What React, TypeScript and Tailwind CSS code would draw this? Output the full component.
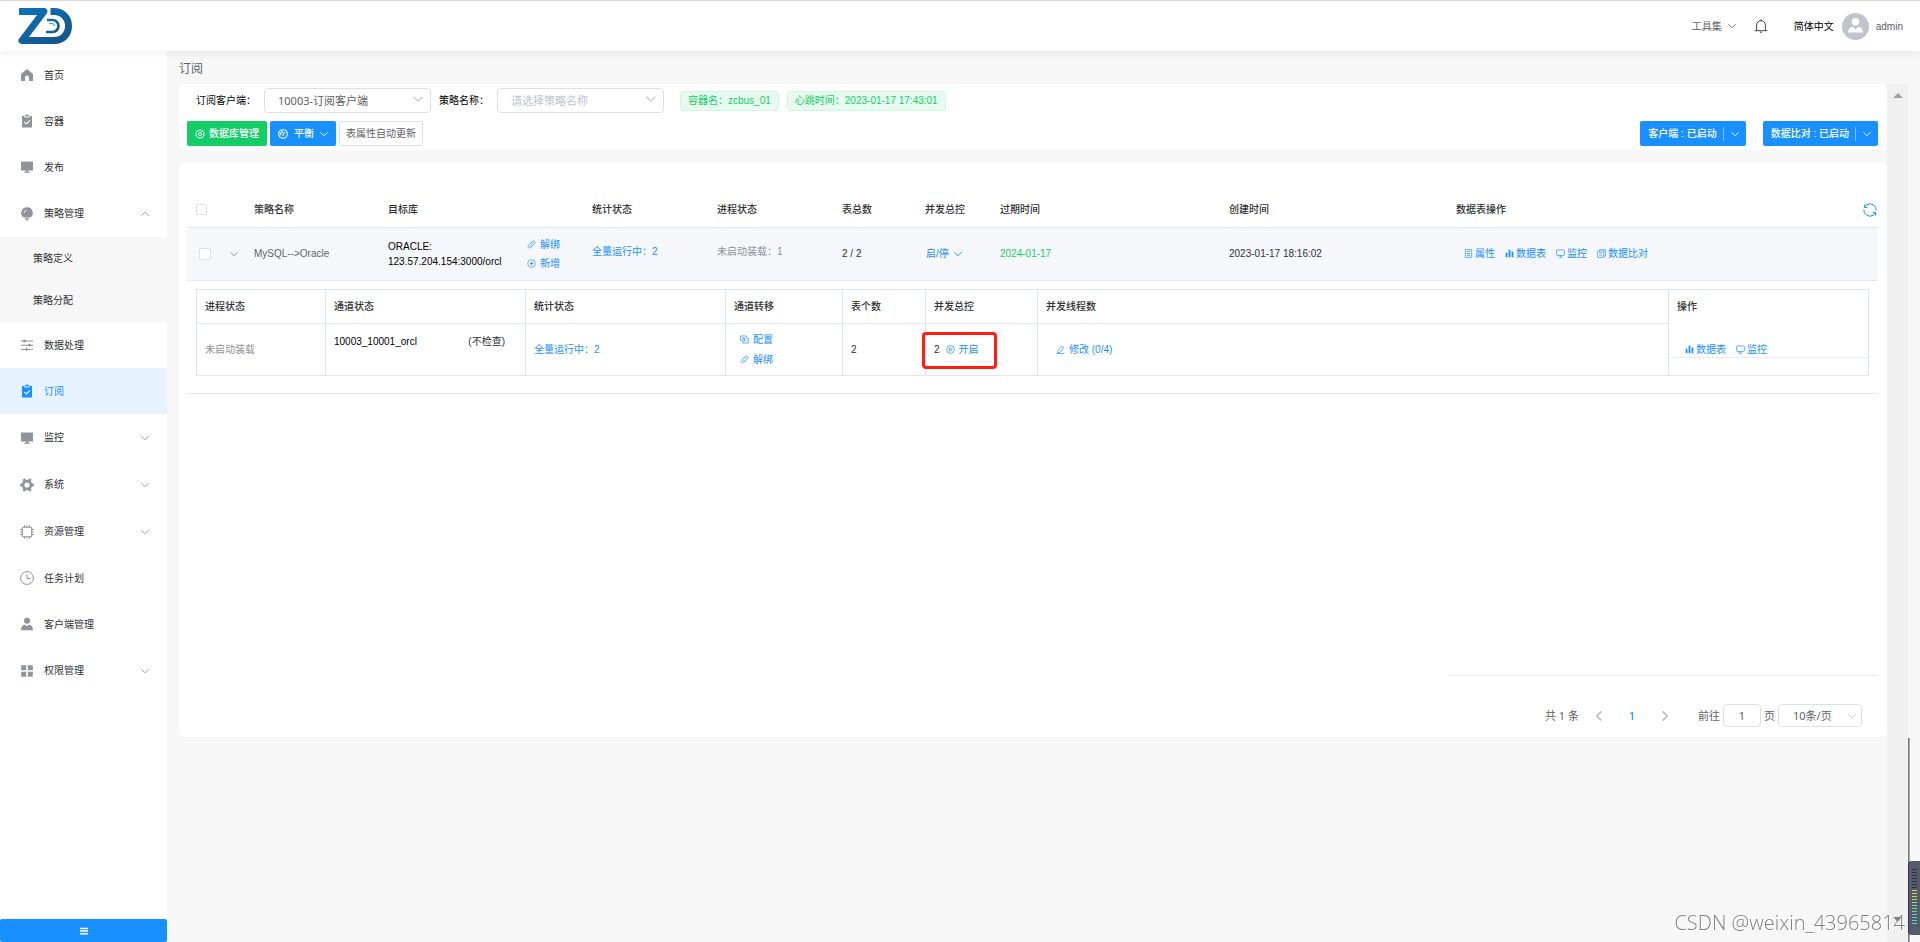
import type { ReactNode } from "react";

const icons = {
  home: <path fill="currentColor" d="M7 1 13 6v7H9V9.5a2 2 0 0 0-4 0V13H1V6z" />,
  clipboard: (
    <>
      <path fill="currentColor" d="M2 2h2.5v1.5h5V2H12v11.5H2zM5.2.8h3.6v1.8H5.2z" />
      <path fill="none" stroke="#fff" strokeWidth="1.1" d="m4.4 8 2 2 3.6-3.6" />
    </>
  ),
  screen: <path fill="currentColor" d="M1.5 1.5h11a.5.5 0 0 1 .5.5v8.5H1V2a.5.5 0 0 1 .5-.5zM5.8 10.5h2.4v1.2h1.6v1H4.2v-1h1.6z" />,
  bulb: (
    <>
      <path fill="currentColor" d="M7 .3a5.600 5.600 0 0 1 3.400 10.200H3.600A5.600 5.600 0 0 1 7 .3zM4.800 11.200h4.400v1H4.800zM5.800 12.600h2.400v.9H5.800z" />
      <path fill="none" stroke="#fff" strokeWidth=".8" d="M4 6a3 3 0 0 1 2.6-2.7" />
    </>
  ),
  sliders: (
    <g stroke="currentColor" fill="currentColor" strokeWidth="1">
      <path d="M1 3h12M1 7.2h12M1 11.4h12" />
      <circle cx="4.5" cy="3" r="1" />
      <circle cx="9.5" cy="7.2" r="1" />
      <circle cx="6.5" cy="11.4" r="1" />
    </g>
  ),
  gear: (
    <g fill="none" stroke="currentColor">
      <circle cx="7" cy="7" r="3.9" strokeWidth="2.6" />
      <path
        strokeWidth="3"
        d="M.2 7h2M11.800 7h2M3.600 1.100l1 1.700M9.400 11.200l1 1.700M10.400 1.100l-1 1.700M4.600 11.200l-1 1.700"
      />
    </g>
  ),
  cpu: (
    <g fill="none" stroke="currentColor">
      <rect x="2.3" y="2.3" width="9.4" height="9.4" rx="1" strokeWidth="1.1" />
      <path
        strokeWidth="1"
        d="M4.500 .2v2M7 .2v2M9.500 .2v2M4.500 11.800v2M7 11.800v2M9.500 11.800v2M.2 4.500h2M.2 7h2M.2 9.500h2M11.800 4.500h2M11.800 7h2M11.800 9.500h2"
      />
    </g>
  ),
  clock: (
    <g fill="none" stroke="currentColor">
      <circle cx="7" cy="7" r="6.4" />
      <path d="M7 3.5V7.5h3.4" />
    </g>
  ),
  user: <path fill="currentColor" d="M7 .8a3 3 0 1 1 0 6 3 3 0 0 1 0-6zM1 13.2c0-3.4 1.8-5.4 4-5.4h.4L7 9.4l1.6-1.6H9c2.2 0 4 2 4 5.4z" />,
  grid: <path fill="currentColor" d="M1.2 1.2h5v5h-5zM7.8 1.2h5v5h-5zM1.2 7.8h5v5h-5zM7.8 7.8h5v5h-5z" />,
  link: (
    <g fill="none" stroke="currentColor" strokeWidth="1.1" strokeLinecap="round">
      <path d="M6 4.5 8.3 2.2a2.5 2.5 0 0 1 3.5 3.5L8.6 8.9a2.5 2.5 0 0 1-3.5 0" />
      <path d="M8 9.5 5.7 11.8a2.5 2.5 0 0 1-3.5-3.5l3.2-3.2a2.5 2.5 0 0 1 3.5 0" />
    </g>
  ),
  plus: (
    <g fill="none" stroke="currentColor">
      <circle cx="7" cy="7" r="6" />
      <path strokeWidth="1.2" d="M7 4v6M4 7h6" />
    </g>
  ),
  play: (
    <g fill="none" stroke="currentColor" strokeWidth="1.1">
      <circle cx="7" cy="7" r="6" />
      <path d="M5.5 4.2v5.6L9.8 7z" />
    </g>
  ),
  copy: (
    <g fill="none" stroke="currentColor" strokeWidth="1.1">
      <path d="M4 8.500H1V1.500h9v3" />
      <path d="M10 5.500h3v7H4.500v-7H7M4 4.500h3v4.500h3.500" />
    </g>
  ),
  edit: (
    <g fill="none" stroke="currentColor" strokeWidth="1.1">
      <path d="M9 1.5 12 4 6 11.5l-3.4.8.4-3.6zM1 13.2h12" />
    </g>
  ),
  doc: (
    <g fill="none" stroke="currentColor" strokeWidth="1.1">
      <path d="M2 1h10v12H2zM4.5 4h5M4.5 7h5M4.5 10h5" />
    </g>
  ),
  bars: <path fill="currentColor" d="M1 6h2.8v7H1zM5.6 1h2.8v12H5.6zM10.2 4H13v9h-2.8z" />,
  monitor: (
    <g fill="none" stroke="currentColor" strokeWidth="1.1">
      <rect x="1" y="1.5" width="12" height="8.5" rx="1" />
      <path d="M7 10v2.5M4 12.8h6" />
    </g>
  ),
  docs: (
    <g fill="none" stroke="currentColor" strokeWidth="1">
      <path d="M4 3.2V1h9v10h-2.4M1 3.2h9.5V13H1zM3.3 6.3h5M3.3 9.5h5" />
    </g>
  ),
  database: (
    <g fill="none" stroke="currentColor">
      <path strokeWidth="1.4" d="m7 1 1.7 1.2 2.1.1.6 2L13 5.7 12.3 7.6l.4 2-1.8 1.1-.9 1.8-2.1-.3L7 13l-1-.8-2 .3-.9-1.8-1.8-1.1.4-2L1 5.7l1.6-1.4.6-2 2.1-.1z" />
      <circle cx="7" cy="7" r="2.2" strokeWidth="1.4" />
    </g>
  ),
  gauge: (
    <g fill="none" stroke="currentColor" strokeWidth="1.6">
      <circle cx="7" cy="7" r="6" />
      <path d="M4 8.800a3.200 3.200 0 0 1 3-4.800M6.600 9.800 9 4.200" />
    </g>
  ),
  refresh: (
    <g fill="none" stroke="currentColor" strokeWidth="1">
      <path d="M4 1.6A6.2 6.2 0 0 1 13.200 7.400M4.400 4.400H1.400V1.400M1.600 4.200A6.200 6.200 0 0 1 4 1.600" />
      <path d="M10 12.400A6.200 6.200 0 0 1 .8 6.600M9.600 9.600h3v3M12.400 9.800A6.200 6.200 0 0 1 10 12.400" />
    </g>
  ),
  bell: (
    <g fill="none" stroke="currentColor" strokeWidth=".9">
      <path d="M2.6 11.6V6a4.4 4.4 0 0 1 8.8 0v5.6M.6 11.7h12.8M7 .4v1.2M6 13.2h2" />
    </g>
  ),
  menu: <path fill="none" stroke="currentColor" strokeWidth="2.6" d="M0 2.600h14M0 7.200h14M0 11.800h14" />,
};

type IconName = keyof typeof icons;

function Icon({ name, className = "size-3.5" }: { name: IconName; className?: string }) {
  return (
    <svg viewBox="0 0 14 14" aria-hidden="true" className={`shrink-0 ${className}`}>
      {icons[name]}
    </svg>
  );
}

function Chevron({ className = "size-2" }: { className?: string }) {
  return (
    <svg viewBox="0 0 8 8" aria-hidden="true" className={`shrink-0 ${className}`}>
      <path d="M.4 2.2 4 5.8l3.6-3.6" fill="none" stroke="currentColor" strokeWidth=".9" />
    </svg>
  );
}

function Logo() {
  return (
    <svg viewBox="0 0 56 38" className="h-[38px] w-14" aria-label="ZD">
      <defs>
        <linearGradient id="logoZ" x1="0" y1="0" x2="1" y2="1">
          <stop offset="0" stopColor="#0a72bb" />
          <stop offset="1" stopColor="#165488" />
        </linearGradient>
      </defs>
      <g fill="none" stroke="url(#logoZ)" strokeLinejoin="round">
        <path strokeWidth="7" d="M3 4.500h25L6 33.500h32c8.500 0 14.500-6 14.500-14.500S46 4.500 38 4.500h-3.500" />
        <path strokeWidth="2.6" d="M31 13h5.500a6 6 0 0 1 0 12H30" />
        <path stroke="#4a9bd0" strokeWidth="1.2" d="M33 16.500h3a2.500 2.500 0 0 1 2.300 2.500" />
      </g>
    </svg>
  );
}

interface MenuItem {
  icon: IconName;
  label: string;
  group?: boolean;
  active?: boolean;
  children?: string[];
}

const menu: MenuItem[] = [
  { icon: "home", label: "首页" },
  { icon: "clipboard", label: "容器" },
  { icon: "screen", label: "发布" },
  { icon: "bulb", label: "策略管理", group: true, children: ["策略定义", "策略分配"] },
  { icon: "sliders", label: "数据处理" },
  { icon: "clipboard", label: "订阅", active: true },
  { icon: "screen", label: "监控", group: true },
  { icon: "gear", label: "系统", group: true },
  { icon: "cpu", label: "资源管理", group: true },
  { icon: "clock", label: "任务计划" },
  { icon: "user", label: "客户端管理" },
  { icon: "grid", label: "权限管理", group: true },
];

function Sidebar() {
  return (
    <aside className="flex w-[167px] shrink-0 flex-col justify-between bg-white">
      <nav className="pt-px">
        <ul>
          {menu.map((item) => (
            <li key={item.label}>
              <a
                href="#"
                className={`flex items-center gap-2.5 pl-5 pr-[18px] ${item.group ? "h-[47px]" : "h-[46px]"} ${
                  item.active ? "bg-[#e6f3ff] text-[#1890ff]" : "text-[#303133]"
                }`}
              >
                <Icon name={item.icon} className={item.active ? "size-3.5" : "size-3.5 text-[#909399]"} />
                <span className="flex-1">{item.label}</span>
                {item.group && (
                  <Chevron
                    className={item.children ? "size-2 rotate-180 text-[#909399]" : "size-2 text-[#909399]"}
                  />
                )}
              </a>
              {item.children && (
                <ul className="bg-[#f7f7f7] pb-px">
                  {item.children.map((child) => (
                    <li key={child}>
                      <a href="#" className="flex h-[42px] items-center pl-[33px] text-[#303133]">
                        {child}
                      </a>
                    </li>
                  ))}
                </ul>
              )}
            </li>
          ))}
        </ul>
      </nav>
      <button
        type="button"
        aria-label="收起菜单"
        className="flex h-[23px] items-center justify-center rounded-xs bg-[#1890ff] text-white"
      >
        <Icon name="menu" className="size-2" />
      </button>
    </aside>
  );
}

function Header() {
  return (
    <header className="relative z-10 flex h-[51px] shrink-0 items-center justify-between border-t border-[#d9d9d9] bg-white pl-4 pr-[17px] shadow-[0_2px_8px_rgba(0,0,0,0.07)]">
      <Logo />
      <div className="flex items-center">
        <button type="button" className="mr-[18px] flex items-center gap-1.5 text-[#606266]">
          工具集
          <Chevron />
        </button>
        <button type="button" aria-label="通知" className="mr-[26px] text-[#303133]">
          <Icon name="bell" />
        </button>
        <span className="mr-2 text-black">简体中文</span>
        <svg viewBox="0 0 27 27" aria-hidden="true" className="mr-[7px] size-[27px]">
          <circle cx="13.5" cy="13.5" r="13.5" fill="#c0c4cc" />
          <path fill="#fff" d="M13.500 5a3.800 3.800 0 1 1 0 7.600 3.800 3.800 0 0 1 0-7.600zM6 19.500c.3-3.400 2.200-5.400 4.500-5.700l3 2.700 3-2.700c2.300.3 4.200 2.300 4.500 5.700z" />
        </svg>
        <span className="text-[#606266]">admin</span>
      </div>
    </header>
  );
}

const wideFont = "font-[family-name:'Noto_Sans','Noto_Sans_CJK_SC',sans-serif]";

function Filters() {
  return (
    <section className="rounded-md bg-white py-1 pl-2 pr-[9px]">
      <div className="flex h-[25px] items-center pl-[9px] text-black">
        <label htmlFor="client">订阅客户端：</label>
        <SelectBox id="client" value="10003-订阅客户端" className="text-[#606266]" />
        <label htmlFor="policy" className="ml-2">
          策略名称：
        </label>
        <SelectBox id="policy" value="请选择策略名称" className="text-[#c0c4cc]" />
        <Tag className="ml-4">容器名：zcbus_01</Tag>
        <Tag className="ml-2">心跳时间：2023-01-17 17:43:01</Tag>
      </div>
      <div className="mt-2 flex items-center gap-[3px]">
        <button
          type="button"
          className="flex h-[25px] items-center gap-1 rounded-xs bg-[#13ce66] px-2 font-medium text-white"
        >
          <Icon name="database" className="size-2.5" />
          数据库管理
        </button>
        <button
          type="button"
          className="flex h-[25px] items-center gap-1.5 rounded-xs bg-[#1890ff] px-2 font-medium text-white"
        >
          <Icon name="gauge" className="size-2.5" />
          平衡
          <Chevron />
        </button>
        <button type="button" className="h-[25px] rounded-xs border border-[#dcdfe6] px-1.5 text-[#606266]">
          表属性自动更新
        </button>
        <div className="ml-auto flex gap-[17px]">
          <SplitButton label="客户端 : 已启动" />
          <SplitButton label="数据比对 : 已启动" />
        </div>
      </div>
    </section>
  );
}

function SelectBox({ id, value, className }: { id: string; value: string; className: string }) {
  return (
    <div className="relative ml-2 w-[167px]">
      <select
        id={id}
        className={`h-[25px] w-full appearance-none rounded-sm border border-[#dcdfe6] bg-white pl-[13px] text-[11px] ${wideFont} ${className}`}
      >
        <option>{value}</option>
      </select>
      <Chevron className="pointer-events-none absolute right-2 top-1.5 size-2.5 text-[#c0c4cc]" />
    </div>
  );
}

function Tag({ className, children }: { className: string; children: ReactNode }) {
  return (
    <span
      className={`flex h-5 items-center rounded-sm border border-[#d0f5e0] bg-[#e7faf0] px-[7px] text-[#13ce66] ${className}`}
    >
      {children}
    </span>
  );
}

function SplitButton({ label }: { label: string }) {
  return (
    <div className="flex h-[25px] items-center rounded-xs bg-[#1890ff] text-white">
      <button type="button" className="pl-2 pr-1.5 font-medium">
        {label}
      </button>
      <button
        type="button"
        aria-label={`${label} 更多`}
        className="flex h-3.5 items-center border-l border-white/50 px-[7px]"
      >
        <Chevron />
      </button>
    </div>
  );
}

function IconLink({
  icon,
  tight,
  children,
}: {
  icon: IconName;
  tight?: boolean;
  children: ReactNode;
}) {
  return (
    <a href="#" className={`flex items-center text-[#1890ff] ${tight ? "gap-0.5" : "gap-1"}`}>
      <Icon name={icon} className="size-[9px]" />
      {children}
    </a>
  );
}

function Checkbox({ label, className }: { label: string; className: string }) {
  return (
    <input
      type="checkbox"
      aria-label={label}
      className={`block appearance-none rounded-xs border border-[#dcdfe6] bg-white ${className}`}
    />
  );
}

function PolicyTable() {
  return (
    <table className="w-full table-fixed text-left">
      <colgroup>
        <col className="w-[35px]" />
        <col className="w-6" />
        <col className="w-[134px]" />
        <col className="w-[204px]" />
        <col className="w-[125px]" />
        <col className="w-[125px]" />
        <col className="w-[83px]" />
        <col className="w-[75px]" />
        <col className="w-[229px]" />
        <col className="w-[227px]" />
        <col />
      </colgroup>
      <thead>
        <tr className="h-[34px] border-b border-[#dfe6ec] text-[#303133] [&>th]:px-2 [&>th]:font-medium">
          <th>
            <Checkbox label="全选" className="ml-px size-[11px]" />
          </th>
          <th></th>
          <th>策略名称</th>
          <th>目标库</th>
          <th>统计状态</th>
          <th>进程状态</th>
          <th>表总数</th>
          <th>并发总控</th>
          <th>过期时间</th>
          <th>创建时间</th>
          <th className="pr-px!">
            <div className="flex items-center justify-between">
              数据表操作
              <button type="button" aria-label="刷新" className="text-[#1890ff]">
                <Icon name="refresh" />
              </button>
            </div>
          </th>
        </tr>
      </thead>
      <tbody>
        <tr className="h-[53px] border-b border-[#dfe6ec] bg-[#f5f7fa] text-[#303133] [&>td]:px-2">
          <td>
            <Checkbox label="选择 MySQL-->Oracle" className="ml-1 size-3" />
          </td>
          <td>
            <button type="button" aria-label="展开" className="block text-[#909399]">
              <Chevron />
            </button>
          </td>
          <td className="text-[#606266]">MySQL--&gt;Oracle</td>
          <td>
            <div className="flex items-center">
              <div className="w-[139px] text-black">
                ORACLE:
                <br />
                123.57.204.154:3000/orcl
              </div>
              <div className="flex flex-col gap-1">
                <IconLink icon="link">解绑</IconLink>
                <IconLink icon="plus">新增</IconLink>
              </div>
            </div>
          </td>
          <td>
            <a href="#" className="block pb-1 text-[#1890ff]">
              全量运行中：2
            </a>
          </td>
          <td>
            <span className="block pb-1 text-[#909399]">未启动装载：1</span>
          </td>
          <td>2 / 2</td>
          <td>
            <button type="button" className="flex items-center gap-[5px] pl-px text-[#1890ff]">
              启/停
              <Chevron />
            </button>
          </td>
          <td className="text-[#13ce66]">2024-01-17</td>
          <td>2023-01-17 18:16:02</td>
          <td>
            <div className="flex gap-2.5 pl-2">
              <IconLink icon="doc" tight>属性</IconLink>
              <IconLink icon="bars" tight>数据表</IconLink>
              <IconLink icon="monitor" tight>监控</IconLink>
              <IconLink icon="docs" tight>数据比对</IconLink>
            </div>
          </td>
        </tr>
        <tr className="border-b border-[#dfe6ec]">
          <td colSpan={11} className="px-[9px] pb-[17px] pt-2">
            <ChannelTable />
          </td>
        </tr>
      </tbody>
    </table>
  );
}

function ChannelTable() {
  return (
    <table className="w-full table-fixed text-left text-[#303133]">
      <colgroup>
        <col className="w-[129px]" />
        <col className="w-[200px]" />
        <col className="w-[200px]" />
        <col className="w-[117px]" />
        <col className="w-[83px]" />
        <col className="w-28" />
        <col />
        <col className="w-[200px]" />
      </colgroup>
      <thead>
        <tr className="h-[34px] [&>th]:border [&>th]:border-[#dfe6ec] [&>th]:px-2 [&>th]:font-medium">
          <th>进程状态</th>
          <th>通道状态</th>
          <th>统计状态</th>
          <th>通道转移</th>
          <th>表个数</th>
          <th>并发总控</th>
          <th>并发线程数</th>
          <th className="border-b-0!">操作</th>
        </tr>
      </thead>
      <tbody>
        <tr className="h-[52px] [&>td]:border [&>td]:border-[#dfe6ec] [&>td]:px-2">
          <td className="text-[#909399]">未启动装载</td>
          <td>
            <div className="flex justify-between pb-4 pr-3 text-black">
              10003_10001_orcl
              <span className="text-[#303133]">(不检查)</span>
            </div>
          </td>
          <td>
            <a href="#" className="text-[#1890ff]">全量运行中：2</a>
          </td>
          <td>
            <div className="flex flex-col gap-[5px] pl-1.5">
              <IconLink icon="copy">配置</IconLink>
              <IconLink icon="link">解绑</IconLink>
            </div>
          </td>
          <td>2</td>
          <td>
            <div className="relative flex items-center gap-1.5">
              2<IconLink icon="play">开启</IconLink>
              <span className="pointer-events-none absolute -left-3 -top-2.5 h-[37px] w-[75px] rounded-sm border-[3px] border-[#ff1f10]" />
            </div>
          </td>
          <td>
            <div className="flex pl-2.5">
              <IconLink icon="edit">修改 (0/4)</IconLink>
            </div>
          </td>
          <td className="border-t-0! p-0!">
            <div className="mb-4 flex h-[35px] items-end gap-2.5 border-b border-[#e6ebf5] pl-4">
              <IconLink icon="bars" tight>数据表</IconLink>
              <IconLink icon="monitor" tight>监控</IconLink>
            </div>
          </td>
        </tr>
      </tbody>
    </table>
  );
}

function Pagination() {
  return (
    <div
      className={`flex items-center justify-end pb-2.5 pr-4 pt-7 text-[11px] text-[#606266] ${wideFont}`}
    >
      <span>共 1 条</span>
      <button type="button" aria-label="上一页" className="ml-[15px] text-[#a8abb2]">
        <Chevron className="size-2.5 rotate-90" />
      </button>
      <button type="button" className="w-14 font-medium text-[#1890ff]">
        1
      </button>
      <button type="button" aria-label="下一页" className="text-[#a8abb2]">
        <Chevron className="size-2.5 -rotate-90" />
      </button>
      <label htmlFor="page" className="ml-7">
        前往
      </label>
      <input
        id="page"
        defaultValue="1"
        className="mx-[3px] h-[23px] w-[38px] rounded-sm border border-[#dcdfe6] text-center"
      />
      <span>页</span>
      <div className="relative ml-[3px] w-[84px]">
        <select
          aria-label="每页条数"
          className="h-[23px] w-full appearance-none rounded-sm border border-[#dcdfe6] bg-white pl-3.5"
        >
          <option>10条/页</option>
        </select>
        <Chevron className="pointer-events-none absolute right-1.5 top-2 size-2 text-[#c0c4cc]" />
      </div>
    </div>
  );
}

// colours of the volume bars, top to bottom
const levels = [
  "bg-[#2f333e]", "bg-[#2f333e]", "bg-[#2f333e]", "bg-[#2f333e]", "bg-[#2f333e]",
  "bg-[#2f333e]", "bg-[#2f333e]", "bg-[#e5c84c]", "bg-[#e0d050]", "bg-[#cfd655]",
  "bg-[#b8d860]", "bg-[#a0d870]", "bg-[#8cd880]", "bg-[#76d690]", "bg-[#66d6a0]",
  "bg-[#5cd6ae]", "bg-[#54d4b8]", "bg-[#54d4b8]", "bg-[#54d4b8]",
];

function FloatingMeter() {
  return (
    <>
      <div className="fixed bottom-0 right-2.5 h-[204px] w-0.5 bg-linear-to-r from-[#666] to-[#bbb]" />
      <div className="fixed bottom-[7px] right-0 flex h-[74px] w-3 flex-col items-center rounded-l-sm border-l border-[#343844] bg-[#555b6a] pt-2">
        <div className="flex flex-col gap-0.5">
          {levels.map((level, i) => (
            <span key={i} className={`h-px w-[5px] ${level}`} />
          ))}
        </div>
      </div>
      <div className="pointer-events-none fixed bottom-3 right-[15px] text-[20px] font-light text-[#808080] [text-shadow:1px_1px_0_#fff] font-[family-name:'Open_Sans',sans-serif]">
        CSDN @weixin_43965814
      </div>
    </>
  );
}

export default function App() {
  return (
    <div className="flex min-h-screen flex-col bg-[#f7f7f7] text-[10px] leading-[15px] font-[family-name:'Liberation_Sans','Noto_Sans_CJK_SC',sans-serif]">
      <Header />
      <div className="flex flex-1">
        <Sidebar />
        <main className="flex min-w-0 flex-1 flex-col pl-3 pr-3">
          <h1 className="pb-[7px] pt-[11px] text-xs leading-[15px] text-[#606266]">订阅</h1>
          <div className="flex flex-1">
            <div className="min-w-0 flex-1">
              <Filters />
              <section className="mt-3 rounded-md bg-white pl-2 pr-[9px] pt-[31px]">
                <div className="flex h-[483px] flex-col justify-between">
                  <PolicyTable />
                  <div className="w-[430px] self-end border-b border-[#e6ebf5]" />
                </div>
                <Pagination />
              </section>
            </div>
            <div className="flex w-[21px] flex-col items-center justify-between bg-[#f0f0f0] pb-5 pt-[9px]">
              <svg viewBox="0 0 10 5" aria-hidden="true" className="h-[5px] w-2.5">
                <path fill="#a3a3a3" d="M5 0 10 5H0z" />
              </svg>
              <svg viewBox="0 0 10 5" aria-hidden="true" className="h-[5px] w-2.5">
                <path fill="#808080" d="M5 5 0 0h10z" />
              </svg>
            </div>
          </div>
        </main>
      </div>
      <FloatingMeter />
    </div>
  );
}
